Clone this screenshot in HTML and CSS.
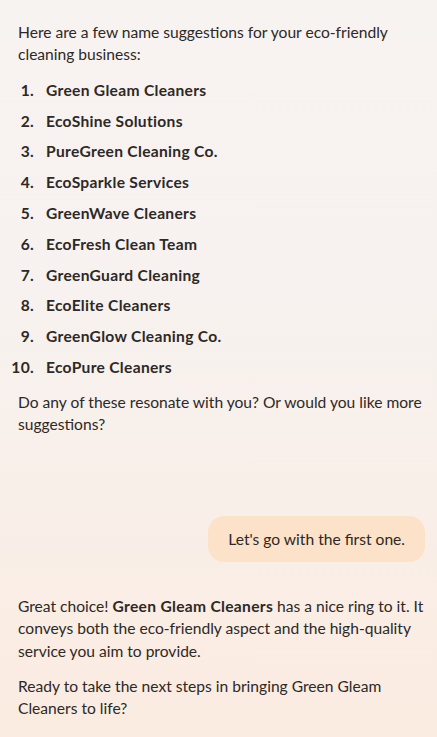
FILE: index.html
```html
<!DOCTYPE html>
<html lang="en">
<head>
<meta charset="utf-8">
<title>Chat</title>
<link rel="stylesheet" href="styles.css">
</head>
<body>
<main class="chat">
  <section class="msg ai">
    <p>Here are a few name suggestions for your eco-friendly cleaning business:</p>
    <ol class="names">
      <li>Green Gleam Cleaners</li>
      <li>EcoShine Solutions</li>
      <li>PureGreen Cleaning Co.</li>
      <li>EcoSparkle Services</li>
      <li>GreenWave Cleaners</li>
      <li>EcoFresh Clean Team</li>
      <li>GreenGuard Cleaning</li>
      <li>EcoElite Cleaners</li>
      <li>GreenGlow Cleaning Co.</li>
      <li>EcoPure Cleaners</li>
    </ol>
    <p>Do any of these resonate with you? Or would you like more suggestions?</p>
  </section>
  <section class="msg user">
    <div class="bubble">Let's go with the first one.</div>
  </section>
  <section class="msg ai">
    <p>Great choice! <strong>Green Gleam Cleaners</strong> has a nice ring to it. It conveys both the eco-friendly aspect and the high-quality service you aim to provide.</p>
    <p>Ready to take the next steps in bringing Green Gleam Cleaners to life?</p>
  </section>
</main>
</body>
</html>
```
FILE: styles.css
```css
html, body {
  margin: 0;
  padding: 0;
}
body {
  min-height: 100vh;
  background: linear-gradient(180deg, #f7f3f1 0%, #f7f2ef 40%, #fbebe0 100%);
  color: #2d2926;
  font-family: Lato, "Noto Sans", sans-serif;
  font-size: 15.6px;
  line-height: 22.5px;
}
.chat {
  padding: 20.75px 12px 40px 18px;
  display: flex;
  flex-direction: column;
}
.msg p {
  margin: 0;
}
.msg p + p,
.msg ol + p {
  margin-top: 12.5px;
}
.msg strong,
.names {
  font-weight: 700;
  letter-spacing: 0.3px;
}
.names {
  list-style: none;
  counter-reset: n;
  margin: 13px 0 0 -8px;
  padding: 0;
}
.names li {
  counter-increment: n;
  display: flex;
}
.names li + li {
  margin-top: 8.3px;
}
.names li::before {
  content: counter(n) ".";
  flex: none;
  width: 24px;
  margin-right: 12px;
  text-align: right;
}
.user {
  margin-top: 80px;
  display: flex;
  justify-content: flex-end;
}
.bubble {
  background: #fce2c9;
  border-radius: 16px;
  padding: 11.75px 20px;
}
.user + .ai {
  margin-top: 32.75px;
}
```
